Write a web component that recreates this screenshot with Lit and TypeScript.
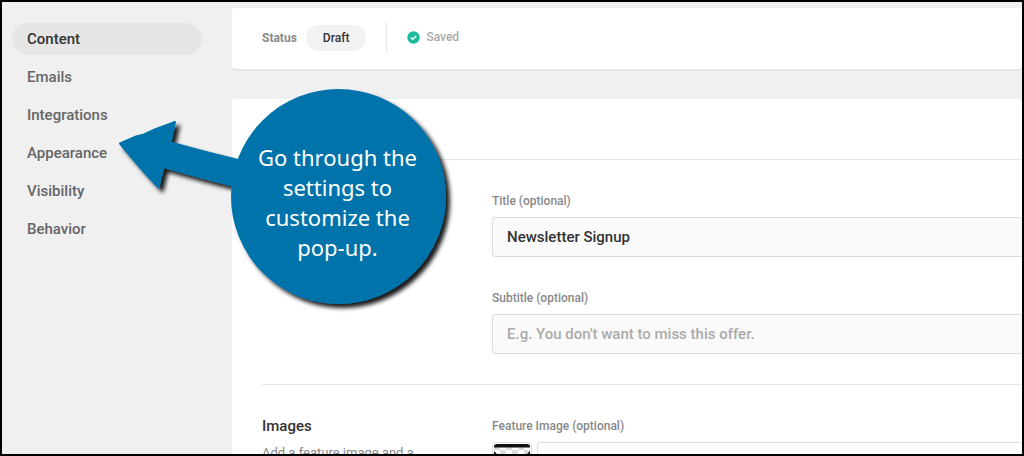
import { LitElement, html, css } from "lit";
import { customElement, property } from "lit/decorators.js";

@customElement("settings-nav")
class SettingsNav extends LitElement {
  @property({ attribute: false }) items: string[] = [];
  @property() current = "";

  static styles = css`
    :host {
      display: block;
      padding: 21px 30px 0 10px;
    }
    .list {
      display: flex;
      flex-direction: column;
      gap: 6px;
      margin: 0;
      padding: 0;
      list-style: none;
    }
    .link {
      display: block;
      padding: 0 15px;
      border-radius: 16px;
      color: #666;
      font-size: 15px;
      font-weight: 500;
      line-height: 32px;
      text-decoration: none;
    }
    .link.current {
      background: #e6e6e6;
      color: #333;
    }
  `;

  render() {
    return html`<nav aria-label="Settings">
      <ul class="list">
        ${this.items.map(
          (item) => html`<li>
            <a
              class="link ${item === this.current ? "current" : ""}"
              href="#${item.toLowerCase()}"
              >${item}</a
            >
          </li>`
        )}
      </ul>
    </nav>`;
  }
}

@customElement("status-bar")
class StatusBar extends LitElement {
  static styles = css`
    :host {
      display: flex;
      align-items: center;
      box-sizing: border-box;
      height: 61px;
      padding: 0 30px 2px;
      border-radius: 4px;
      background: #fff;
      box-shadow: 0 2px 0 #e6e6e6;
      font-size: 12px;
      font-weight: 500;
      line-height: 22px;
      color: #888;
    }
    .label {
      font-weight: 700;
    }
    .tag {
      margin-left: 9px;
      padding: 2px 17px;
      border-radius: 13px;
      background: #f2f2f2;
      color: #333;
    }
    .saved {
      display: flex;
      align-items: center;
      gap: 6px;
      margin-left: 20px;
      padding-left: 20px;
      border-left: 1px solid #e6e6e6;
      line-height: 31px;
      color: #aaa;
    }
    .check {
      display: block;
      margin-bottom: 1px;
    }
  `;

  render() {
    return html`
      <span class="label">Status</span>
      <span class="tag">Draft</span>
      <span class="saved">
        <svg class="check" width="13" height="13" viewBox="0 0 13 13" aria-hidden="true">
          <circle cx="6.5" cy="6.5" r="6.2" fill="#1abc9c" />
          <path d="M3.9 6.6 5.8 8.3 9.2 5" fill="none" stroke="#fff" stroke-width="1.5" />
        </svg>
        Saved
      </span>
    `;
  }
}

@customElement("content-panel")
class ContentPanel extends LitElement {
  static styles = css`
    :host {
      display: block;
      border-radius: 4px;
      background: #fff;
    }
    .header {
      height: 60px;
      border-bottom: 1px solid #e6e6e6;
    }
    .row {
      display: grid;
      grid-template-columns: 200px 1fr;
      gap: 30px;
      padding: 30px 0;
      margin-left: 30px;
    }
    .row + .row {
      border-top: 1px solid #e6e6e6;
    }
    .fields {
      display: grid;
      gap: 30px;
    }
    .heading {
      margin: 0;
      color: #333;
      font-size: 15px;
      font-weight: 500;
      line-height: 22px;
    }
    .hint {
      margin: 5px 0 0;
      color: #888;
      font-size: 13px;
      line-height: 22px;
    }
    .label {
      display: block;
      margin-bottom: 5px;
      color: #888;
      font-size: 12px;
      font-weight: 500;
      line-height: 22px;
    }
    .input {
      display: block;
      box-sizing: border-box;
      width: 100%;
      height: 40px;
      padding: 0 14px;
      border: 1px solid #ddd;
      border-right: 0;
      border-radius: 4px 0 0 4px;
      background: #fafafa;
      color: #333;
      font-family: inherit;
      font-size: 15px;
      font-weight: 500;
      outline: 0;
    }
    .input::placeholder {
      color: #aaa;
      opacity: 1;
    }
    .upload {
      display: flex;
      gap: 5px;
    }
    .preview {
      box-sizing: border-box;
      width: 40px;
      height: 40px;
      padding: 1px;
      border: 1px solid #ddd;
      border-radius: 4px;
      background: #fff;
    }
    .thumb {
      display: block;
    }
    .choose {
      flex: 1;
      height: 40px;
      padding: 0;
      border: 1px solid #ddd;
      border-right: 0;
      border-radius: 4px 0 0 4px;
      background: #fff;
    }
  `;

  render() {
    return html`
      <div class="header"></div>
      <section class="row">
        <div></div>
        <div class="fields">
          <div>
            <label class="label" for="title">Title (optional)</label>
            <input class="input" id="title" type="text" value="Newsletter Signup" />
          </div>
          <div>
            <label class="label" for="subtitle">Subtitle (optional)</label>
            <input
              class="input"
              id="subtitle"
              type="text"
              placeholder="E.g. You don't want to miss this offer."
            />
          </div>
        </div>
      </section>
      <section class="row">
        <div>
          <h2 class="heading">Images</h2>
          <p class="hint">Add a feature image and a</p>
        </div>
        <div>
          <label class="label" for="feature">Feature Image (optional)</label>
          <div class="upload">
            <div class="preview">
              <svg class="thumb" width="36" height="36" viewBox="0 0 36 36" aria-hidden="true">
                <defs>
                  <pattern id="checks" width="12" height="12" patternUnits="userSpaceOnUse">
                    <rect width="12" height="12" fill="#fff" />
                    <path d="M0 0h6v6H0zM6 6h6v6H6z" fill="#ddd" />
                  </pattern>
                </defs>
                <rect width="36" height="36" rx="3" fill="url(#checks)" />
                <path d="M0 3.5V3Q0 0 3 0H33Q36 0 36 3V3.5Z" fill="#111" />
                <path d="M0 7L5 12L0 17ZM36 7L31 12L36 17Z" fill="#111" />
              </svg>
            </div>
            <button class="choose" id="feature" type="button"></button>
          </div>
        </div>
      </section>
    `;
  }
}

@customElement("callout-bubble")
class CalloutBubble extends LitElement {
  static styles = css`
    :host {
      display: block;
      width: 340px;
      height: 230px;
    }
    .shape {
      position: absolute;
      inset: 0;
      overflow: visible;
    }
    .text {
      position: absolute;
      top: 62px;
      left: 120px;
      width: 215px;
      margin: 0;
      color: #fff;
      font-family: "Noto Sans", "Open Sans", sans-serif;
      font-size: 22px;
      line-height: 30px;
      text-align: center;
    }
    .line {
      display: block;
    }
  `;

  render() {
    const lines = ["Go through the", "settings to", "customize the", "pop-up."];
    return html`
      <svg class="shape" width="340" height="230" viewBox="110 80 340 230" aria-hidden="true">
        <defs>
          <filter id="shadow" filterUnits="userSpaceOnUse" x="100" y="70" width="370" height="260">
            <feDropShadow
              dx="4"
              dy="4"
              stdDeviation="2"
              flood-color="#000"
              flood-opacity="0.9"
            />
          </filter>
        </defs>
        <g
          fill="#0073aa"
          stroke="#0073aa"
          stroke-width="2"
          stroke-linejoin="round"
          filter="url(#shadow)"
        >
          <circle cx="338.5" cy="196.5" r="106.5" />
          <path
            d="M120 143.5 L136 136.5 L144 134.5 L156 129 L175 122 L170.5 142.5 L208 152.5
               L250 163 V190 L205 178.5 L163.5 167 L161 177 L158.5 187.5 L146 174 L133 159 Z"
          />
        </g>
      </svg>
      <p class="text">${lines.map((l) => html`<span class="line">${l}</span>`)}</p>
    `;
  }
}

@customElement("app-root")
class AppRoot extends LitElement {
  static styles = css`
    :host {
      display: block;
      position: relative;
      box-sizing: border-box;
      height: 100vh;
      overflow: hidden;
      border: 2px solid #000;
      background: #f0f0f0;
      font-family: Roboto, "Liberation Sans", sans-serif;
    }
    .layout {
      display: grid;
      grid-template-columns: 230px 1fr;
    }
    .main {
      display: grid;
      gap: 30px;
      padding-top: 6px;
    }
    .callout {
      position: absolute;
      top: 78px;
      left: 108px;
    }
  `;

  private sections = [
    "Content",
    "Emails",
    "Integrations",
    "Appearance",
    "Visibility",
    "Behavior",
  ];

  render() {
    return html`
      <div class="layout">
        <settings-nav .items=${this.sections} current="Content"></settings-nav>
        <main class="main">
          <status-bar></status-bar>
          <content-panel></content-panel>
        </main>
      </div>
      <callout-bubble class="callout"></callout-bubble>
    `;
  }
}
